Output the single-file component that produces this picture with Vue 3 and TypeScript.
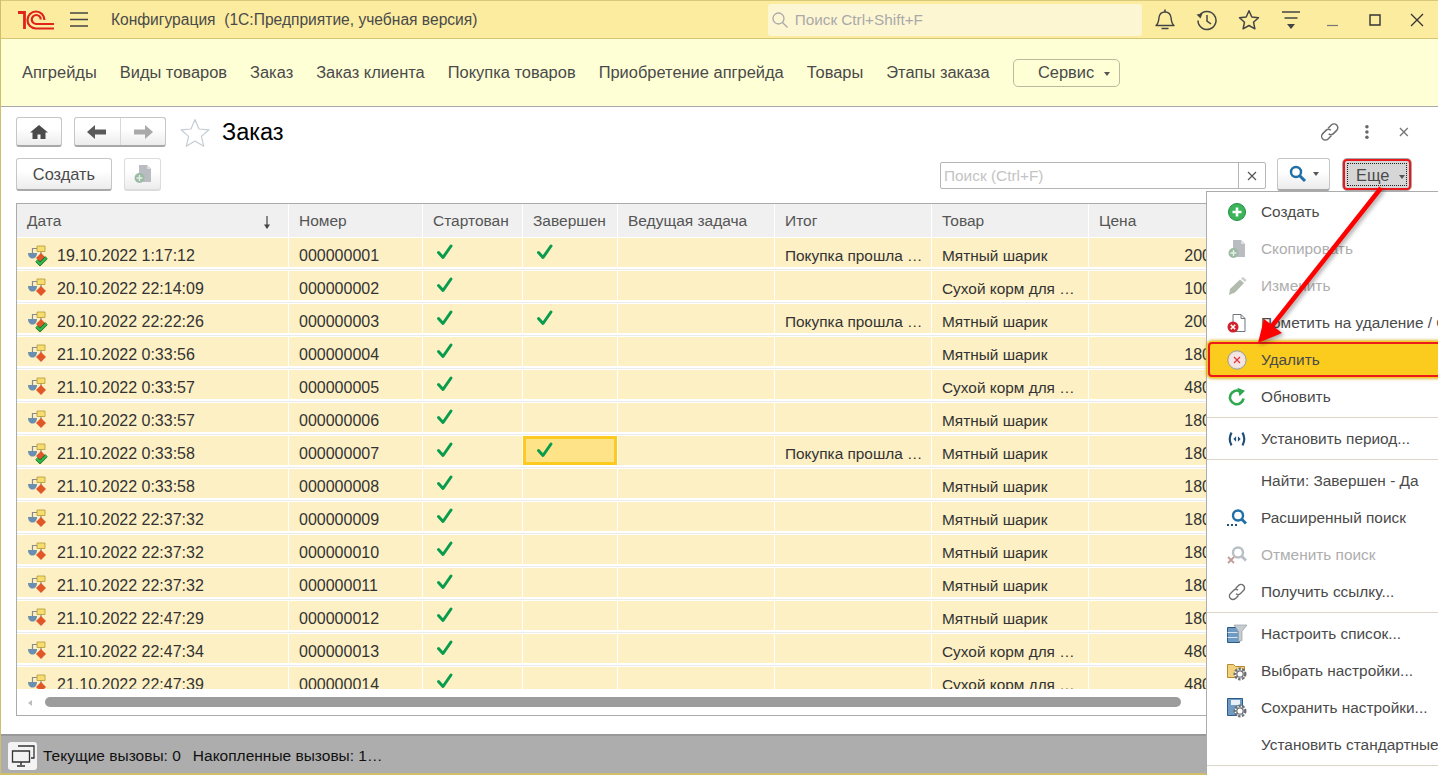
<script setup lang="ts">
type Row = {
  date: string;
  num: string;
  done: boolean;
  goods: string;
  price: string;
};

const raw: [string, boolean, string, string][] = [
  ["19.10.2022 1:17:12", true, "m", "200"],
  ["20.10.2022 22:14:09", false, "s", "100"],
  ["20.10.2022 22:22:26", true, "m", "200"],
  ["21.10.2022 0:33:56", false, "m", "180"],
  ["21.10.2022 0:33:57", false, "s", "480"],
  ["21.10.2022 0:33:57", false, "m", "180"],
  ["21.10.2022 0:33:58", true, "m", "180"],
  ["21.10.2022 0:33:58", false, "m", "180"],
  ["21.10.2022 22:37:32", false, "m", "180"],
  ["21.10.2022 22:37:32", false, "m", "180"],
  ["21.10.2022 22:37:32", false, "m", "180"],
  ["21.10.2022 22:47:29", false, "m", "180"],
  ["21.10.2022 22:47:34", false, "s", "480"],
  ["21.10.2022 22:47:39", false, "s", "480"],
];

const rows: Row[] = raw.map((r, i) => ({
  date: r[0],
  num: String(i + 1).padStart(9, "0"),
  done: r[1],
  goods: r[2] === "m" ? "Мятный шарик" : "Сухой корм для …",
  price: r[3],
}));

const navItems = [
  "Апгрейды",
  "Виды товаров",
  "Заказ",
  "Заказ клиента",
  "Покупка товаров",
  "Приобретение апгрейда",
  "Товары",
  "Этапы заказа",
];

const columns = ["Дата", "Номер", "Стартован", "Завершен", "Ведущая задача", "Итог", "Товар", "Цена"];

const menu = [
  { label: "Создать", icon: "i-add" },
  { label: "Скопировать", icon: "i-copy", off: true },
  { label: "Изменить", icon: "i-pencil", off: true },
  { label: "Пометить на удаление / Снять пометку", icon: "i-mark" },
  { label: "Удалить", icon: "i-del", active: true },
  { label: "Обновить", icon: "i-refresh" },
  { sep: true },
  { label: "Установить период...", icon: "i-period" },
  { sep: true },
  { label: "Найти: Завершен - Да" },
  { label: "Расширенный поиск", icon: "i-adv" },
  { label: "Отменить поиск", icon: "i-cancel", off: true },
  { label: "Получить ссылку...", icon: "i-link" },
  { sep: true },
  { label: "Настроить список...", icon: "i-list" },
  { label: "Выбрать настройки...", icon: "i-folder" },
  { label: "Сохранить настройки...", icon: "i-save" },
  { label: "Установить стандартные настройки" },
  { sep: true },
];
</script>

<template>
  <div class="window">
    <svg class="defs" width="0" height="0">
      <defs>
        <symbol id="i-add" viewBox="0 0 20 20">
          <circle cx="10" cy="10" r="8.5" fill="#3cb55a" stroke="#1f8f42" />
          <path d="M10 5.500v9M5.500 10h9" stroke="#fff" stroke-width="2.600" />
        </symbol>
        <symbol id="i-copy" viewBox="0 0 20 20">
          <path d="M6 1h8l4 4v13H6z" fill="#b9bcc0" />
          <path d="M14 1v4h4" fill="#dcdee0" />
          <circle cx="6.500" cy="14" r="5" fill="#9dbba4" />
          <path d="M6.500 11v6M3.500 14h6" stroke="#e6efe8" stroke-width="1.400" />
        </symbol>
        <symbol id="i-pencil" viewBox="0 0 20 20">
          <path d="M2 19l1-6L13 3.500l4 3.500-9 9.500z" fill="#b3bbae" />
          <path d="M14 2.500l2-1.500 3.500 3-1.500 2z" fill="#c9cec6" />
        </symbol>
        <symbol id="i-mark" viewBox="0 0 20 20">
          <path d="M6 1.500h8l4 4v13H6z" fill="#fff" stroke="#6e7680" />
          <path d="M14 1.500v4h4" fill="none" stroke="#6e7680" />
          <circle cx="6" cy="14" r="5.500" fill="#d0222b" />
          <path d="M3.800 11.800l4.400 4.400M8.200 11.800l-4.400 4.400" stroke="#fff" stroke-width="1.600" />
        </symbol>
        <symbol id="i-del" viewBox="0 0 20 20">
          <circle cx="10" cy="10" r="9.200" fill="#e9e3d4" stroke="#9a9a92" />
          <circle cx="10" cy="10" r="7.600" fill="#f4e4e4" />
          <path d="M7 7l6 6M13 7l-6 6" stroke="#e2343c" stroke-width="1.300" />
        </symbol>
        <symbol id="i-refresh" viewBox="0 0 20 20">
          <path d="M16.500 11.500A6.800 6.800 0 1 1 13.200 4.500" fill="none" stroke="#2fa84f" stroke-width="2.600" />
          <path d="M10.500 .8l7.500 3-5.500 5.500z" fill="#2fa84f" />
        </symbol>
        <symbol id="i-period" viewBox="0 0 22 20">
          <path d="M5 3Q1 10 5 17M17 3Q21 10 17 17" fill="none" stroke="#1f4e79" stroke-width="2.400" />
          <path d="M10 7l-3 3 3 3zM12 7l3 3-3 3z" fill="#1f4e79" />
        </symbol>
        <symbol id="i-adv" viewBox="0 0 20 20">
          <circle cx="11" cy="7.500" r="5" fill="none" stroke="#1f6fa8" stroke-width="2.400" />
          <path d="M14.500 11l4.500 4.500" stroke="#1f6fa8" stroke-width="3" />
          <path d="M0 17h2M4 17h2M8 17h2" stroke="#1f4e79" stroke-width="1.800" />
        </symbol>
        <symbol id="i-cancel" viewBox="0 0 20 20">
          <circle cx="11" cy="7.500" r="5" fill="none" stroke="#b9c0c5" stroke-width="2.400" />
          <path d="M14.500 11l4.500 4.500" stroke="#b9c0c5" stroke-width="3" />
          <path d="M1 12l6 6M7 12l-6 6" stroke="#c49a9a" stroke-width="1.800" />
        </symbol>
        <symbol id="i-link" viewBox="0 0 20 20">
          <g fill="none" stroke="#6e6e6e" stroke-width="1.400">
            <path d="M8.500 6.500l3-3a3.400 3.400 0 0 1 5 5l-3 3a3.400 3.400 0 0 1-4.500.3" />
            <path d="M11.500 13.500l-3 3a3.400 3.400 0 0 1-5-5l3-3a3.400 3.400 0 0 1 4.500-.3" />
          </g>
        </symbol>
        <symbol id="i-list" viewBox="0 0 20 20">
          <path d="M.5 3.500h12v15H.5z" fill="#6f9ac4" stroke="#2a5a86" />
          <path d="M.5 8.500h10M.5 13.500h10" stroke="#d6e4f0" />
          <path d="M7 1h13l-5 6.500v9l-3.500 1v-10z" fill="#c6cdd2" stroke="#8a949b" stroke-width=".6" />
        </symbol>
        <symbol id="i-folder" viewBox="0 0 20 20">
          <path d="M.5 3.500h6l2 2h9v11H.5z" fill="#f3d27d" stroke="#b98a2e" />
          <circle cx="13" cy="13" r="5.300" fill="#fff" stroke="#6b6f73" stroke-width="2.400" stroke-dasharray="2.400 1.400" />
          <circle cx="13" cy="13" r="3.200" fill="#fff" stroke="#6b6f73" stroke-width="1.300" />
        </symbol>
        <symbol id="i-save" viewBox="0 0 20 20">
          <path d="M.5 .5h15v17H.5z" fill="#6f9ac4" stroke="#2a5a86" />
          <path d="M4 2h9v5H4z" fill="#e8f0f6" />
          <circle cx="13" cy="13" r="5.300" fill="#fff" stroke="#6b6f73" stroke-width="2.400" stroke-dasharray="2.400 1.400" />
          <circle cx="13" cy="13" r="3.200" fill="#fff" stroke="#6b6f73" stroke-width="1.300" />
        </symbol>
        <symbol id="i-doc" viewBox="0 0 20 20">
          <path d="M4.500 8V3.500H9M13 6v3" fill="none" stroke="#8a8a8a" stroke-width="1.200" />
          <path d="M0 8h9c0 3.500-2 5.500-4.500 5.500S0 11.500 0 8z" fill="#6b8fb0" />
          <path d="M9 1h8v5.500H9z" fill="#f7dc6e" stroke="#b39a3a" stroke-width=".8" />
          <path d="M13 8l5 5-5 5-5-5z" fill="#e0582a" />
        </symbol>
        <symbol id="i-check" viewBox="0 0 18 18">
          <path d="M2.500 9.500l4.500 5L15 3" fill="none" stroke="#0a9c4e" stroke-width="3" stroke-linecap="round" stroke-linejoin="round" />
        </symbol>
      </defs>
    </svg>

    <header class="titlebar">
      <svg class="logo" width="38" height="20" viewBox="0 0 38 20">
        <g fill="none" stroke="#e0231c">
          <path d="M1 2.500H7.500V19" stroke-width="2.800" />
          <path d="M37 18.500H19A8.500 8.500 0 1 1 27.500 10" stroke-width="2.200" />
          <path d="M37 14H19.500A4.500 4.500 0 1 1 23.800 9.500" stroke-width="2.200" />
        </g>
      </svg>
      <svg class="burger" width="18" height="15" viewBox="0 0 18 15">
        <path d="M0 1h18M0 7.500h18M0 14h18" stroke="#444" stroke-width="1.300" />
      </svg>
      <div class="app-title">Конфигурация&nbsp; (1С:Предприятие, учебная версия)</div>
      <div class="global-search">
        <svg width="18" height="18" viewBox="0 0 18 18">
          <circle cx="7.500" cy="7.500" r="5.500" fill="none" stroke="#a9a9a9" stroke-width="1.300" />
          <path d="M11.500 11.500l5 5" stroke="#a9a9a9" stroke-width="1.300" />
        </svg>
        <span>Поиск Ctrl+Shift+F</span>
      </div>
      <div class="sys-icons">
        <svg width="22" height="24" viewBox="0 0 22 24">
          <path d="M2 17.500c2.500-2 2.500-4 3-8 .5-3.500 3-5.500 6-5.500s5.500 2 6 5.500c.5 4 .5 6 3 8z" fill="none" stroke="#444" stroke-width="1.400" stroke-linejoin="round" />
          <path d="M11 1.500V4M7.500 20.500h7" stroke="#444" stroke-width="1.600" />
        </svg>
        <svg width="22" height="22" viewBox="0 0 22 22">
          <path d="M3.500 6.500A9 9 0 1 1 2 11.500" fill="none" stroke="#444" stroke-width="1.500" />
          <path d="M.5 5.500l6-1-2 5z" fill="#444" />
          <path d="M11 6v6l4 3" fill="none" stroke="#444" stroke-width="1.500" />
        </svg>
        <svg width="22" height="22" viewBox="0 0 22 22">
          <path d="M11 1.800l2.800 6.200 6.700.7-5 4.500 1.400 6.600L11 16.500l-5.900 3.300 1.400-6.600-5-4.500 6.700-.7z" fill="none" stroke="#444" stroke-width="1.500" stroke-linejoin="round" />
        </svg>
        <svg width="20" height="20" viewBox="0 0 20 20">
          <path d="M1 2h18M3.500 8h13" stroke="#444" stroke-width="1.400" />
          <path d="M6 14h8l-4 5z" fill="#444" />
        </svg>
        <svg width="14" height="14" viewBox="0 0 14 14"><path d="M1 12.500h11" stroke="#777" stroke-width="1.200" /></svg>
        <svg width="14" height="14" viewBox="0 0 14 14"><path d="M2 2h10v10H2z" fill="none" stroke="#333" stroke-width="1.400" /></svg>
        <svg width="14" height="14" viewBox="0 0 14 14"><path d="M1 1l12 12M13 1L1 13" stroke="#333" stroke-width="1.300" /></svg>
      </div>
    </header>

    <nav class="sections">
      <a v-for="n in navItems" :key="n" class="nav-item">{{ n }}</a>
      <button class="service">Сервис <i class="caret"></i></button>
    </nav>

    <main class="content">
      <div class="head-row">
        <button class="btn home">
          <svg width="18" height="16" viewBox="0 0 18 16">
            <path d="M9 1L0 8.500h2.500V15h5v-4.500h3V15h5V8.500H18z" fill="#4a4a4a" />
          </svg>
        </button>
        <div class="btn nav-pair">
          <span class="half">
            <svg width="20" height="14" viewBox="0 0 20 14"><path d="M8 0L0 7l8 7V9.500h11v-5H8z" fill="#595959" /></svg>
          </span>
          <span class="half">
            <svg width="20" height="14" viewBox="0 0 20 14"><path d="M12 0l8 7-8 7V9.500H1v-5h11z" fill="#a9a9a9" /></svg>
          </span>
        </div>
        <svg class="fav" width="30" height="29" viewBox="0 0 30 29">
          <path d="M15 1.500l4 9.500 10 .8-7.600 6.600 2.300 9.800L15 23l-8.700 5.200 2.300-9.800L1 11.800l10-.8z" fill="#fff" stroke="#c4ccd4" stroke-width="1.200" stroke-linejoin="round" />
        </svg>
        <h1>Заказ</h1>
        <div class="form-tools">
          <svg width="22" height="22" viewBox="0 0 20 20"><use href="#i-link" /></svg>
          <svg width="6" height="16" viewBox="0 0 6 16">
            <circle cx="3" cy="2.500" r="1.800" fill="#666" /><circle cx="3" cy="8" r="1.800" fill="#666" /><circle cx="3" cy="13.500" r="1.800" fill="#666" />
          </svg>
          <svg class="form-close" width="10" height="10" viewBox="0 0 10 10"><path d="M1 1l8 8M9 1L1 9" stroke="#777" stroke-width="1.400" /></svg>
        </div>
      </div>

      <div class="cmd-row">
        <button class="btn create">Создать</button>
        <button class="btn copy">
          <svg width="20" height="20" viewBox="0 0 20 20"><use href="#i-copy" /></svg>
        </button>
        <div class="search">
          <span class="search-text">Поиск (Ctrl+F)</span>
          <span class="search-clear">
            <svg width="10" height="10" viewBox="0 0 10 10"><path d="M1 1l8 8M9 1L1 9" stroke="#555" stroke-width="1.200" /></svg>
          </span>
        </div>
        <button class="btn find">
          <svg width="18" height="18" viewBox="0 0 18 18">
            <circle cx="7" cy="7" r="5" fill="none" stroke="#1f6fa8" stroke-width="2.400" />
            <path d="M10.500 10.500l5.500 5.500" stroke="#1f6fa8" stroke-width="3" />
          </svg>
          <i class="caret"></i>
        </button>
        <button class="btn more"><span class="more-inner">Еще <i class="caret"></i></span></button>
      </div>

      <section class="list">
        <div class="grid head">
          <div v-for="c in columns" :key="c" class="hcell">
            {{ c }}
            <svg v-if="c === 'Дата'" class="sort" width="8" height="14" viewBox="0 0 8 14">
              <path d="M4 0v12" stroke="#444" stroke-width="1.200" /><path d="M1 8.500h6L4 13z" fill="#444" />
            </svg>
          </div>
        </div>
        <div class="body">
          <div v-for="(r, i) in rows" :key="i" class="grid row">
            <div class="cell date">
              <span class="row-icon">
                <svg width="20" height="20"><use href="#i-doc" /></svg>
                <svg v-if="r.done" class="row-ok" width="13" height="10" viewBox="0 0 13 10">
                  <path d="M1.500 4.500l3.500 3.500 6.500-6.500" fill="none" stroke="#14682c" stroke-width="3.400" />
                  <path d="M1.500 4.500l3.500 3.500 6.500-6.500" fill="none" stroke="#2fc04a" stroke-width="1.800" />
                </svg>
              </span>
              {{ r.date }}
            </div>
            <div class="cell num">{{ r.num }}</div>
            <div class="cell mark">
              <svg width="18" height="18"><use href="#i-check" /></svg>
            </div>
            <div class="cell mark" :class="{ current: i === 6 }">
              <svg v-if="r.done" width="18" height="18"><use href="#i-check" /></svg>
            </div>
            <div class="cell"></div>
            <div class="cell">{{ r.done ? "Покупка прошла …" : "" }}</div>
            <div class="cell">{{ r.goods }}</div>
            <div class="cell num price">{{ r.price }}</div>
          </div>
        </div>
        <div class="hscroll">
          <i class="arrow-left"></i>
          <div class="thumb"></div>
        </div>
      </section>
    </main>

    <footer class="status">
      <span class="status-btn">
        <svg width="26" height="24" viewBox="0 0 26 24">
          <path d="M8 2h16v12h-3" fill="none" stroke="#333" stroke-width="1.300" />
          <path d="M2.500 7h17v11h-17z" fill="#f2f2f2" stroke="#333" stroke-width="1.300" />
          <path d="M11 18v3M7 22h8" stroke="#333" stroke-width="1.500" />
        </svg>
      </span>
      <span>Текущие вызовы: 0</span>
      <span>Накопленные вызовы: 1…</span>
    </footer>

    <ul class="menu">
      <template v-for="(m, i) in menu" :key="i">
        <li v-if="m.sep" class="sep"></li>
        <li v-else class="mitem" :class="{ off: m.off, active: m.active }">
          <span class="micon">
            <svg v-if="m.icon" width="20" height="20"><use :href="'#' + m.icon" /></svg>
          </span>
          <span class="mtext">{{ m.label }}</span>
        </li>
      </template>
    </ul>

    <svg class="callout" width="1438" height="775" viewBox="0 0 1438 775">
      <path d="M1381 188L1268 331" stroke="#f00" stroke-width="4.500" />
      <path d="M1258 343L1264 319 1282 333z" fill="#f00" />
    </svg>
  </div>
</template>

<style scoped>
.window {
  position: relative;
  width: 1438px;
  height: 775px;
  overflow: hidden;
  display: flex;
  flex-direction: column;
  box-sizing: border-box;
  border-left: 1px solid #cfbe6c;
  background: #cfbe6c;
  font-family: "Liberation Sans", Arial, sans-serif;
  font-size: 15.4px;
  color: #4a4a4a;
}
.defs {
  position: absolute;
}
button {
  font: inherit;
  color: inherit;
  padding: 0;
}

.titlebar {
  flex: none;
  height: 39px;
  box-sizing: border-box;
  display: flex;
  align-items: center;
  background: #fbec9f;
  border-top: 1px solid #d8c878;
  border-bottom: 1px solid #d6c576;
}
.logo {
  margin-left: 16px;
}
.burger {
  margin-left: 15px;
}
.app-title {
  width: 658px;
  margin-left: 23px;
  font-size: 15.6px;
  white-space: nowrap;
}
.global-search {
  width: 375px;
  height: 32px;
  display: flex;
  align-items: center;
  gap: 6px;
  padding-left: 3px;
  box-sizing: border-box;
  background: #fdf6d3;
  border-radius: 3px;
  color: #a9a9a9;
  font-size: 15.3px;
}
.sys-icons {
  margin-left: 2px;
  display: grid;
  grid-template-columns: repeat(7, 42px);
  justify-items: center;
  align-items: center;
}

.sections {
  flex: none;
  height: 68px;
  box-sizing: border-box;
  display: flex;
  align-items: center;
  gap: 23px;
  padding-left: 21px;
  background: #ffffd6;
  border-bottom: 1px solid #a9a9a9;
  font-size: 16.45px;
  white-space: nowrap;
}
.service {
  flex: none;
  width: 107px;
  height: 28px;
  background: transparent;
  border: 1px solid #bdb9a0;
  border-radius: 5px;
  text-align: right;
  padding-right: 9px;
}
.caret {
  display: inline-block;
  vertical-align: middle;
  margin-left: 5px;
  border-left: 3.500px solid transparent;
  border-right: 3.500px solid transparent;
  border-top: 4px solid #555;
}

.content {
  flex: none;
  height: 627px;
  box-sizing: border-box;
  padding: 10px 0 0 15px;
  display: flex;
  flex-direction: column;
  background: #fff;
}
.head-row {
  height: 30px;
  display: flex;
  align-items: center;
}
.btn {
  box-sizing: border-box;
  border: 1px solid #c6c6c6;
  border-bottom: 2px solid #a8a8a8;
  border-radius: 3px;
  background: linear-gradient(#fff 40%, #ececec);
  display: flex;
  align-items: center;
  justify-content: center;
}
.home {
  width: 46px;
  height: 30px;
}
.nav-pair {
  width: 92px;
  height: 30px;
  margin-left: 12px;
}
.half {
  flex: 1;
  height: 100%;
  display: flex;
  align-items: center;
  justify-content: center;
}
.half + .half {
  border-left: 1px solid #d8d8d8;
}
.fav {
  margin-left: 14px;
}
h1 {
  margin: 0 0 0 12px;
  font-weight: 400;
  font-size: 23.500px;
  color: #000;
}
.form-tools {
  margin-left: auto;
  margin-right: 29px;
  display: flex;
  align-items: center;
  gap: 24px;
  width: 90px;
}
.form-close {
  margin-left: 5px;
}

.cmd-row {
  height: 33px;
  margin-top: 11px;
  display: flex;
  align-items: center;
}
.create {
  width: 96px;
  height: 33px;
  font-size: 16.400px;
}
.copy {
  width: 37px;
  height: 33px;
  margin-left: 12px;
  border-color: #dcdcdc;
}
.search {
  width: 326px;
  height: 27px;
  margin-left: 779px;
  margin-top: 2px;
  box-sizing: border-box;
  border: 1px solid #b5b5b5;
  border-radius: 2px;
  display: flex;
  color: #c4c4c4;
}
.search-text {
  flex: 1;
  padding-left: 3px;
  line-height: 26px;
}
.search-clear {
  width: 26px;
  border-left: 1px solid #b5b5b5;
  display: flex;
  align-items: center;
  justify-content: center;
}
.find {
  width: 53px;
  height: 33px;
  margin-left: 11px;
  gap: 1px;
}
.more {
  position: relative;
  width: 70px;
  height: 33px;
  margin-left: 12px;
  background: #d6d6d6;
  border: 1px solid #aaa;
  border-radius: 5px;
  outline: 2px solid #e8181c;
  outline-offset: -3px;
  font-size: 16.400px;
}
.more-inner {
  width: 60px;
  height: 23px;
  line-height: 22px;
  box-sizing: border-box;
  border: 1px dotted #222;
  text-align: right;
  padding-right: 1px;
}

.list {
  width: 1406px;
  height: 513px;
  margin-top: 12px;
  box-sizing: border-box;
  border: 1px solid #ababab;
  display: flex;
  flex-direction: column;
}
.grid {
  display: grid;
  grid-template-columns: 272px 134px 100px 95px 157px 157px 157px 131px 1fr;
}
.head {
  flex: none;
  height: 33px;
}
.hcell {
  position: relative;
  background: #f0f0f0;
  border-right: 1px solid #fff;
  border-bottom: 1px solid #fff;
  box-shadow: 1px 0 0 #cfcfcf;
  padding-left: 10px;
  line-height: 33px;
  font-size: 15.500px;
  color: #555;
}
.sort {
  position: absolute;
  right: 17px;
  top: 12px;
}
.body {
  flex: none;
  height: 452px;
  overflow: hidden;
}
.row {
  height: 33px;
  box-sizing: border-box;
  padding: 1px 0 2px;
  background: #fff;
  border-bottom: 1px solid #ececec;
}
.cell {
  background: #fdf0c4;
  border-right: 1px solid #fff;
  padding: 1px 0 0 10px;
  line-height: 33px;
  color: #333;
  white-space: nowrap;
  overflow: hidden;
}
.num {
  font-size: 16px;
}
.date {
  display: flex;
  align-items: center;
  gap: 9px;
  padding: 6px 0 0 11px;
  font-size: 16px;
  line-height: 20px;
}
.row-icon {
  position: relative;
  width: 20px;
  height: 20px;
  margin-top: -2px;
}
.row-ok {
  position: absolute;
  left: 7px;
  bottom: -1px;
}
.mark {
  padding: 0 0 0 13px;
  line-height: 0;
}
.mark svg {
  margin-top: 5px;
}
.mark.current {
  background: #ffe388;
  box-shadow: inset 0 0 0 3px #fdcb1f;
}
.price {
  text-align: right;
  padding-right: 8px;
}
.hscroll {
  flex: 1;
  position: relative;
  display: flex;
  align-items: flex-start;
}
.arrow-left {
  margin: 11px 0 0 11px;
  border-top: 3px solid transparent;
  border-bottom: 3px solid transparent;
  border-right: 4px solid #bdbdbd;
}
.thumb {
  width: 1136px;
  height: 10px;
  margin: 8px 0 0 13px;
  background: #9c9c9c;
  border-radius: 5px;
}

.status {
  flex: none;
  height: 39px;
  box-sizing: border-box;
  border-top: 2px solid #999;
  background: #adadad;
  display: flex;
  align-items: center;
  gap: 12px;
  padding-left: 7px;
  padding-top: 3px;
  color: #111;
  font-size: 15.500px;
}
.status-btn {
  width: 29px;
  height: 28px;
  margin-right: -6px;
  background: #f3f3f3;
  border-radius: 3px;
  display: flex;
  align-items: center;
  justify-content: center;
}

.menu {
  position: absolute;
  left: 1205px;
  top: 191px;
  width: 240px;
  height: 590px;
  margin: 0;
  padding: 1px 0 0;
  list-style: none;
  box-sizing: border-box;
  background: #fff;
  border: 1px solid #acacac;
}
.mitem {
  height: 37px;
  display: flex;
  align-items: center;
  white-space: nowrap;
}
.micon {
  flex: none;
  width: 54px;
  display: flex;
  justify-content: center;
  padding-left: 6px;
  box-sizing: border-box;
}
.off {
  color: #aeaeae;
}
.active {
  background: #fbcb1e;
  outline: 2px solid #ec1a1a;
  outline-offset: -3px;
  border-radius: 5px;
  box-shadow: 0 0 3px 1px #dcb73a;
}
.sep {
  height: 1px;
  margin: 2px 0;
  background: #dcd6c8;
}

.callout {
  position: absolute;
  left: -1px;
  top: 0;
  pointer-events: none;
  filter: drop-shadow(2px 2px 2px rgba(0, 0, 0, 0.35));
}
</style>
